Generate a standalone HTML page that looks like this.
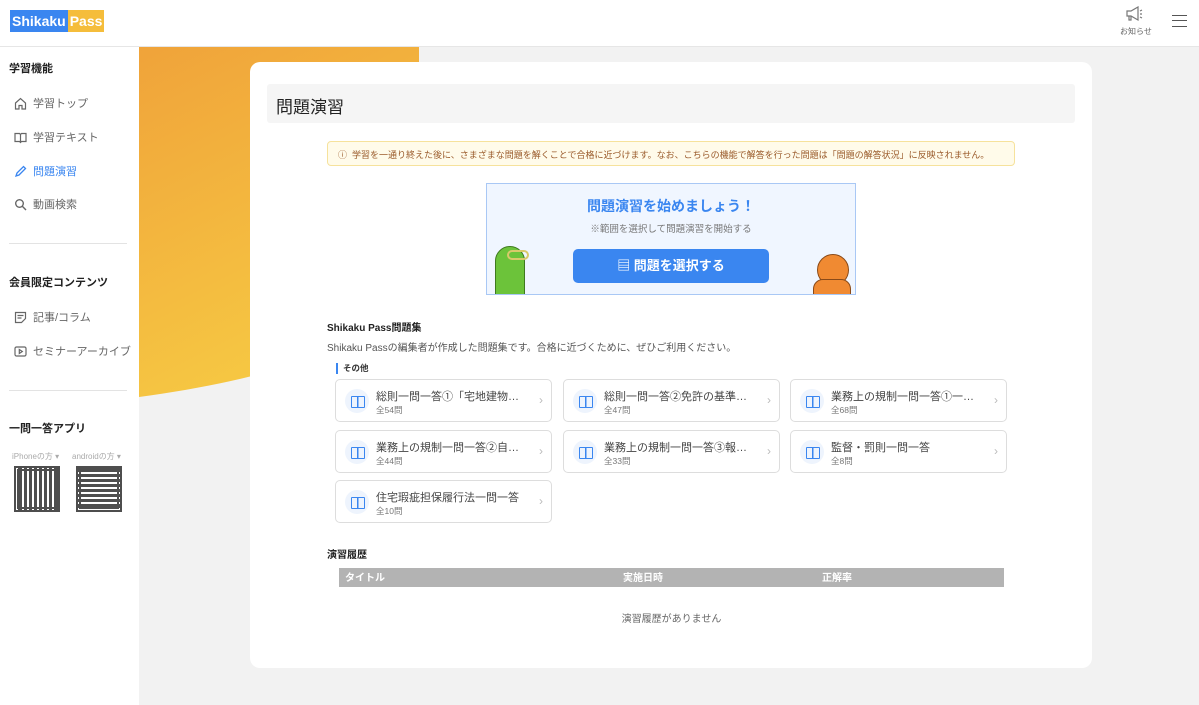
<!DOCTYPE html>
<html><head><meta charset="utf-8"><style>
*{box-sizing:border-box;margin:0;padding:0}
body{width:1199px;height:705px;overflow:hidden;background:#f2f2f2;font-family:"Liberation Sans","Noto Sans CJK JP",sans-serif;position:relative;color:#333}
.hdr{position:absolute;left:0;top:0;width:1199px;height:47px;background:#fff;border-bottom:1px solid #e6e6e6}
.logo{position:absolute;left:10px;top:10px;height:22px;display:flex;font-weight:bold;font-size:14px;color:#fff}
.logo span{display:block;line-height:22px;padding:0 2px}
.side{position:absolute;left:0;top:47px;width:139px;height:658px;background:#fff}
.sh{position:absolute;left:9px;font-size:11px;font-weight:bold;color:#222}
.si{position:absolute;left:14px;font-size:11px;color:#666;display:flex;align-items:center;gap:6px}
.hr{position:absolute;left:9px;width:118px;height:1px;background:#e3e3e3}
.card{position:absolute;left:250px;top:62px;width:842px;height:606px;background:#fff;border-radius:10px}
.abs{position:absolute}
.it{position:absolute;width:217px;height:43px;border:1px solid #ddd;border-radius:5px;background:#fff}
.it .ic{position:absolute;left:9px;top:9px;width:24px;height:24px;border-radius:50%;background:#eef4fd}
.it .t{position:absolute;left:40px;top:8px;font-size:11px;color:#444;white-space:nowrap;width:152px;overflow:hidden;text-overflow:ellipsis}
.it .n{position:absolute;left:40px;top:24px;font-size:8.5px;color:#777}
.it .ar{position:absolute;right:8px;top:13px;color:#bbb;font-size:12px}
</style></head><body>
<div class="hdr">
 <div class="logo"><span style="background:#3a86f0">Shikaku</span><span style="background:#f5bd3b">Pass</span></div>
 <svg class="abs" style="left:1125px;top:6px" width="18" height="16" viewBox="0 0 18 16" fill="none" stroke="#777" stroke-width="1.2"><path d="M2 5h4l7-4v13l-7-4H2z M4 10v4h2v-4 M15 5l2-1 M15 8h2 M15 11l2 1"/></svg>
 <div class="abs" style="left:1120px;top:26px;font-size:8px;color:#666">お知らせ</div>
 <div class="abs" style="left:1172px;top:15px;width:15px;height:12px;border-top:1.5px solid #555;border-bottom:1.5px solid #555"><div style="margin-top:3.5px;height:1.5px;background:#555"></div></div>
</div>
<div class="side">
 <div class="sh" style="top:13px">学習機能</div>
 <div class="si" style="top:48px"><svg width="13" height="13" viewBox="0 0 13 13" fill="none" stroke="#666" stroke-width="1.2"><path d="M1.5 6L6.5 1.5 11.5 6V12H8V8.5H5V12H1.5z"/></svg>学習トップ</div>
 <div class="si" style="top:82px"><svg width="13" height="13" viewBox="0 0 13 13" fill="none" stroke="#666" stroke-width="1.2"><path d="M1 2.5h4.5l1 1 1-1H12v8H7.5l-1 1-1-1H1z M6.5 3.5v7"/></svg>学習テキスト</div>
 <div class="si" style="top:116px;color:#3a86f0"><svg width="13" height="13" viewBox="0 0 13 13" fill="none" stroke="#3a86f0" stroke-width="1.3"><path d="M2 11l1-3 6.5-6.5 2 2L5 10z"/></svg>問題演習</div>
 <div class="si" style="top:149px"><svg width="13" height="13" viewBox="0 0 13 13" fill="none" stroke="#666" stroke-width="1.4"><circle cx="5.5" cy="5.5" r="3.8"/><path d="M8.3 8.3L12 12"/></svg>動画検索</div>
 <div class="hr" style="top:196px"></div>
 <div class="sh" style="top:227px">会員限定コンテンツ</div>
 <div class="si" style="top:262px"><svg width="13" height="13" viewBox="0 0 13 13" fill="none" stroke="#666" stroke-width="1.2"><path d="M1.5 1.5h10v6l-4 4h-6z M3.5 4.5h6 M3.5 7h4"/></svg>記事/コラム</div>
 <div class="si" style="top:296px"><svg width="13" height="13" viewBox="0 0 13 13" fill="none" stroke="#666" stroke-width="1.2"><rect x="1" y="2" width="11" height="9" rx="1.5"/><path d="M5.3 4.5l3 2-3 2z"/></svg>セミナーアーカイブ</div>
 <div class="hr" style="top:343px"></div>
 <div class="sh" style="top:373px">一問一答アプリ</div>
 <div class="abs" style="left:12px;top:404px;font-size:8px;color:#aaa">iPhoneの方 ▾</div>
 <div class="abs" style="left:72px;top:404px;font-size:8px;color:#aaa">androidの方 ▾</div>
 <div class="abs" style="left:14px;top:419px;width:46px;height:46px;background:repeating-linear-gradient(90deg,#222 0 3px,#fff 3px 5px),#222;opacity:.8;border:5px double #222"></div>
 <div class="abs" style="left:76px;top:419px;width:46px;height:46px;background:repeating-linear-gradient(0deg,#222 0 3px,#fff 3px 5px);opacity:.8;border:5px double #222"></div>
</div>
<svg class="abs" style="left:139px;top:47px" width="290" height="360"><defs><linearGradient id="g" x1="0" y1="0" x2="0.4" y2="1"><stop offset="0" stop-color="#f0a33a"/><stop offset="1" stop-color="#f6c943"/></linearGradient></defs><path d="M0 0H280V250C210 310 110 335 0 350Z" fill="url(#g)"/></svg>
<div class="card">
 <div class="abs" style="left:17px;top:22px;width:808px;height:39px;background:#f5f5f5;border-radius:3px;font-size:17px;color:#222;padding:9px 9px">問題演習</div>
 <div class="abs" style="left:77px;top:79px;width:688px;height:25px;background:#fffbea;border:1px solid #f6e29c;border-radius:4px;font-size:9px;color:#9a5a2a;padding:6px 10px;white-space:nowrap">ⓘ&nbsp; 学習を一通り終えた後に、さまざまな問題を解くことで合格に近づけます。なお、こちらの機能で解答を行った問題は「問題の解答状況」に反映されません。</div>
 <div class="abs" style="left:236px;top:121px;width:370px;height:112px;background:#f0f6ff;border:1px solid #a9c8f5;overflow:hidden">
  <div class="abs" style="left:0;width:368px;top:12px;text-align:center;font-size:14px;font-weight:bold;color:#3a86f0">問題演習を始めましょう！</div>
  <div class="abs" style="left:0;width:368px;top:37px;text-align:center;font-size:9.5px;color:#777">※範囲を選択して問題演習を開始する</div>
  <div class="abs" style="left:86px;top:65px;width:196px;height:34px;background:#3a86f0;border-radius:5px;color:#fff;font-weight:bold;font-size:13px;text-align:center;line-height:34px">▤ 問題を選択する</div>
  <div class="abs" style="left:8px;top:62px;width:30px;height:55px;background:#6cc33a;border-radius:15px 15px 4px 4px;border:1px solid #3f7a1f"></div>
  <div class="abs" style="left:20px;top:66px;width:22px;height:10px;border:2px solid #d9c96a;border-radius:5px"></div>
  <div class="abs" style="left:330px;top:70px;width:32px;height:32px;background:#f08a32;border-radius:50%;border:1px solid #8a4a18"></div>
  <div class="abs" style="left:326px;top:95px;width:38px;height:20px;background:#f08a32;border-radius:10px 10px 0 0;border:1px solid #8a4a18"></div>
 </div>
 <div class="abs" style="left:77px;top:257px;font-size:10px;font-weight:bold;color:#222">Shikaku Pass問題集</div>
 <div class="abs" style="left:77px;top:277px;font-size:10px;color:#555">Shikaku Passの編集者が作成した問題集です。合格に近づくために、ぜひご利用ください。</div>
 <div class="abs" style="left:86px;top:301px;height:11px;border-left:2px solid #3a86f0;padding-left:5px;font-size:8.5px;font-weight:bold;color:#333;line-height:11px">その他</div>
</div>
<div class="it" style="left:335px;top:379px"><div class="ic"></div><div class="t">総則一問一答①「宅地建物取引士」</div><div class="n">全54問</div><div class="ar">›</div></div>
<div class="it" style="left:563px;top:379px"><div class="ic"></div><div class="t">総則一問一答②免許の基準と登録</div><div class="n">全47問</div><div class="ar">›</div></div>
<div class="it" style="left:790px;top:379px"><div class="ic"></div><div class="t">業務上の規制一問一答①一般的規制</div><div class="n">全68問</div><div class="ar">›</div></div>
<div class="it" style="left:335px;top:430px"><div class="ic"></div><div class="t">業務上の規制一問一答②自ら売主制限</div><div class="n">全44問</div><div class="ar">›</div></div>
<div class="it" style="left:563px;top:430px"><div class="ic"></div><div class="t">業務上の規制一問一答③報酬・その他</div><div class="n">全33問</div><div class="ar">›</div></div>
<div class="it" style="left:790px;top:430px"><div class="ic"></div><div class="t">監督・罰則一問一答</div><div class="n">全8問</div><div class="ar">›</div></div>
<div class="it" style="left:335px;top:480px"><div class="ic"></div><div class="t">住宅瑕疵担保履行法一問一答</div><div class="n">全10問</div><div class="ar">›</div></div>
<div class="abs" style="left:327px;top:546px;font-size:10px;font-weight:bold;color:#222">演習履歴</div>
<div class="abs" style="left:339px;top:568px;width:665px;height:19px;background:#b3b3b3;color:#fff;font-size:10px;font-weight:bold;line-height:19px">
 <span class="abs" style="left:6px;top:1px">タイトル</span><span class="abs" style="left:284px;top:1px">実施日時</span><span class="abs" style="left:483px;top:1px">正解率</span></div>
<div class="abs" style="left:339px;width:665px;top:610px;text-align:center;font-size:10px;color:#666">演習履歴がありません</div>
<style>.it .ic::after{content:"";position:absolute;left:6px;top:7px;width:12px;height:10px;border:1.3px solid #3a86f0;border-radius:1px;background:linear-gradient(90deg,transparent 5px,#3a86f0 5px 6.3px,transparent 6.3px)}</style>
</body></html>
